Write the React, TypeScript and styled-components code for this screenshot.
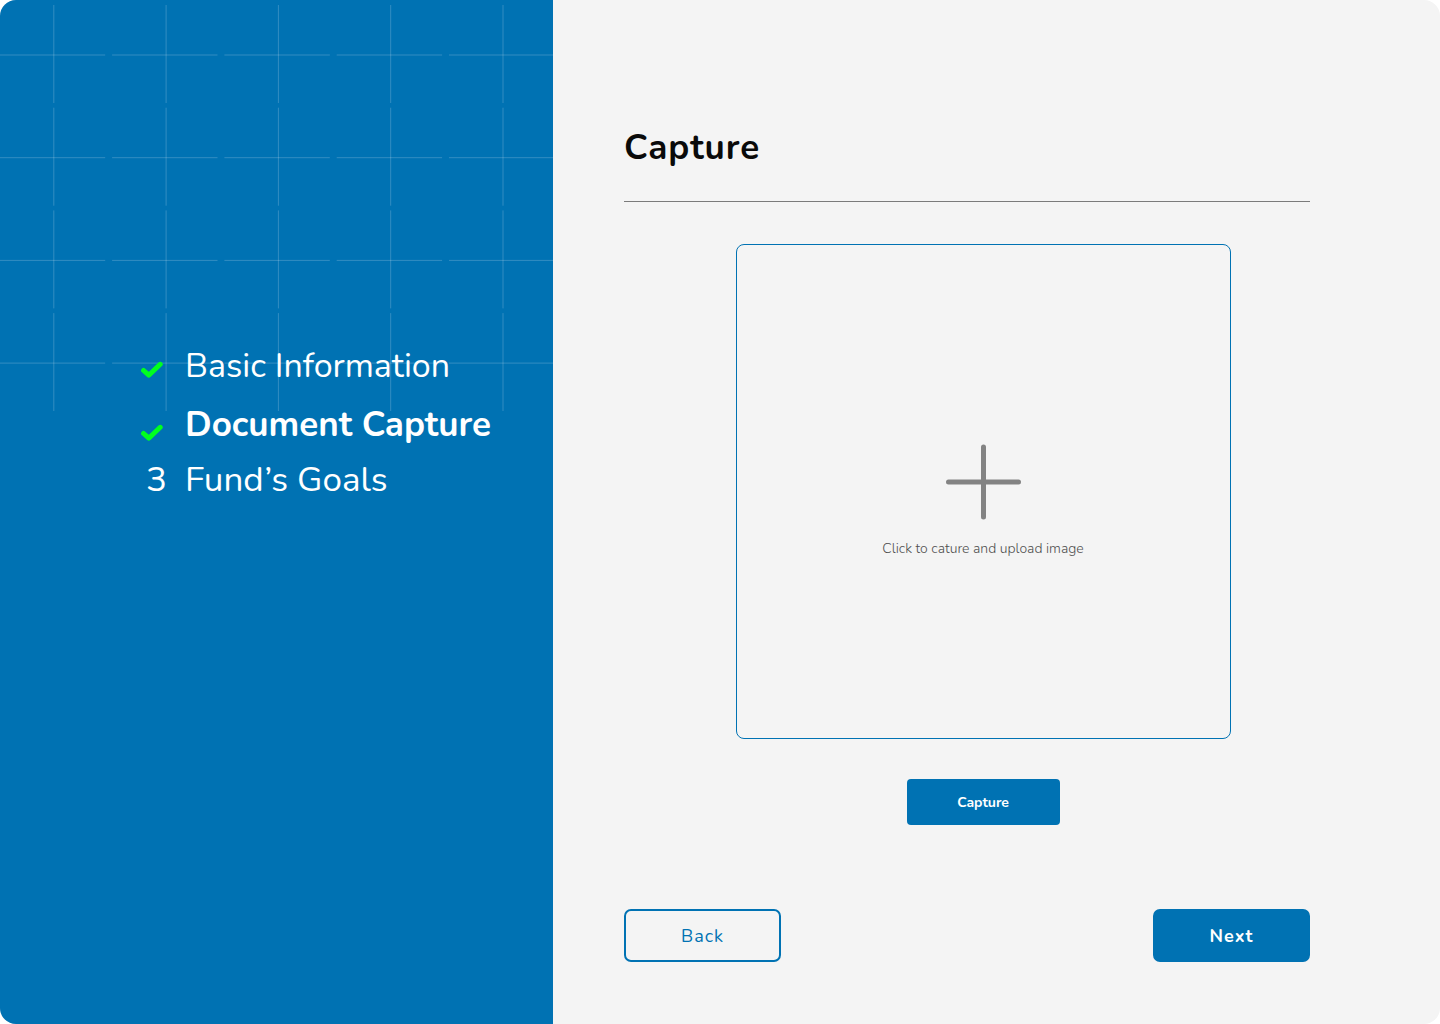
import React from "react";
import styled, { createGlobalStyle } from "styled-components";

const blue = "#0072b3";

const GlobalStyle = createGlobalStyle`
  * { box-sizing: border-box; }
  body { margin: 0; background: #fff; }
  body, button { font-family: Nunito, "Open Sans", "Noto Sans", sans-serif; }
`;

const Page = styled.div`
  display: grid;
  grid-template-columns: 553fr 887fr;
  min-height: 100vh;
  border-radius: 16px;
  overflow: hidden;
  background: #f4f4f4;
`;

const Sidebar = styled.aside`
  position: relative;
  background: ${blue};
  color: #fff;
  padding: 344px 24px 48px 141px;
`;

const GridArt = styled.svg`
  position: absolute;
  top: 0;
  left: 0;
  width: 100%;
  height: auto;
`;

const Steps = styled.ol`
  position: relative;
  list-style: none;
  margin: 0;
  padding: 0;
  display: flex;
  flex-direction: column;
  gap: 11px;
`;

const Step = styled.li<{ $state: "done" | "current" | "upcoming" }>`
  display: grid;
  grid-template-columns: 44px 1fr;
  align-items: center;
  padding-top: ${(p) => (p.$state === "current" ? 4 : 0)}px;
  font-size: ${(p) => (p.$state === "done" ? 34 : 35)}px;
  line-height: 44px;
  font-weight: ${(p) => (p.$state === "current" ? 700 : 400)};
  white-space: nowrap;
`;

const CheckMark = styled.svg<{ $current?: boolean }>`
  width: 22px;
  height: 18px;
  margin-top: ${(p) => (p.$current ? 16 : 8)}px;
`;

const StepNumber = styled.span`
  padding-left: 5px;
`;

const Main = styled.main`
  display: flex;
  flex-direction: column;
  padding: 124px 130px 62px 71px;
`;

const Title = styled.h1`
  margin: 0;
  padding-bottom: 29px;
  border-bottom: 1px solid #7b7b7b;
  color: #0a0a0a;
  font-size: 35px;
  line-height: 48px;
  font-weight: 700;
  letter-spacing: 1px;
`;

const CaptureArea = styled.section`
  display: flex;
  flex-direction: column;
  align-items: center;
  gap: 40px;
  padding: 42px 0 0 32px;
`;

const DropZone = styled.button`
  display: flex;
  flex-direction: column;
  align-items: center;
  justify-content: center;
  gap: 18px;
  width: 100%;
  max-width: 495px;
  aspect-ratio: 1;
  padding: 20px 0 0;
  border: 1px solid ${blue};
  border-radius: 8px;
  background: transparent;
  color: #4f4f4f;
  font-size: 14px;
  line-height: 22px;
  font-weight: 300;
  cursor: pointer;
`;

const Plus = styled.svg`
  width: 76px;
  height: 76px;
`;

const CaptureButton = styled.button`
  width: 153px;
  height: 46px;
  border: 0;
  border-radius: 4px;
  background: ${blue};
  color: #fff;
  font-size: 14px;
  font-weight: 700;
  cursor: pointer;
`;

const Actions = styled.footer`
  display: flex;
  justify-content: space-between;
  margin-top: auto;
`;

const ActionButton = styled.button<{ $primary?: boolean }>`
  width: 157px;
  height: 53px;
  border: 2px solid ${blue};
  border-radius: 7px;
  background: ${(p) => (p.$primary ? blue : "transparent")};
  color: ${(p) => (p.$primary ? "#fff" : blue)};
  font-size: 18px;
  font-weight: ${(p) => (p.$primary ? 700 : 400)};
  letter-spacing: 1px;
  cursor: pointer;
`;

const columns = [0, 1, 2, 3, 4];
const rows = [0, 1, 2, 3];

function GridLines() {
  return (
    <GridArt viewBox="0 0 553 411" aria-hidden="true" fill="none" stroke="#fff" strokeOpacity="0.2">
      {rows.map((r) =>
        columns.map((c) => {
          const x = 53.8 + c * 112.3;
          const y = 55 + r * 102.7;
          return (
            <path
              key={`${r}-${c}`}
              d={`M${x} ${y - 50}V${y + 48}M${x - 54} ${y}H${x + 51.4}`}
            />
          );
        })
      )}
    </GridArt>
  );
}

function Check({ current }: { current?: boolean }) {
  return (
    <CheckMark $current={current} viewBox="0 0 22 18" role="img" aria-label="Completed">
      <path
        d="M2.6 9.5L7.8 14.2L19.2 3.3"
        fill="none"
        stroke="#00ff1e"
        strokeWidth="5"
        strokeLinecap="round"
        strokeLinejoin="round"
      />
    </CheckMark>
  );
}

export default function App() {
  return (
    <>
      <GlobalStyle />
      <Page>
        <Sidebar>
          <GridLines />
          <Steps>
            <Step $state="done">
              <Check />
              <span>Basic Information</span>
            </Step>
            <Step $state="current" aria-current="step">
              <Check current />
              <span>Document Capture</span>
            </Step>
            <Step $state="upcoming">
              <StepNumber>3</StepNumber>
              <span>Fund’s Goals</span>
            </Step>
          </Steps>
        </Sidebar>
        <Main>
          <Title>Capture</Title>
          <CaptureArea>
            <DropZone type="button">
              <Plus viewBox="0 0 76 76" aria-hidden="true">
                <path d="M38.5 3V73M3.5 38H73.5" stroke="#838383" strokeWidth="5" strokeLinecap="round" />
              </Plus>
              Click to cature and upload image
            </DropZone>
            <CaptureButton type="button">Capture</CaptureButton>
          </CaptureArea>
          <Actions>
            <ActionButton type="button">Back</ActionButton>
            <ActionButton type="button" $primary>
              Next
            </ActionButton>
          </Actions>
        </Main>
      </Page>
    </>
  );
}
